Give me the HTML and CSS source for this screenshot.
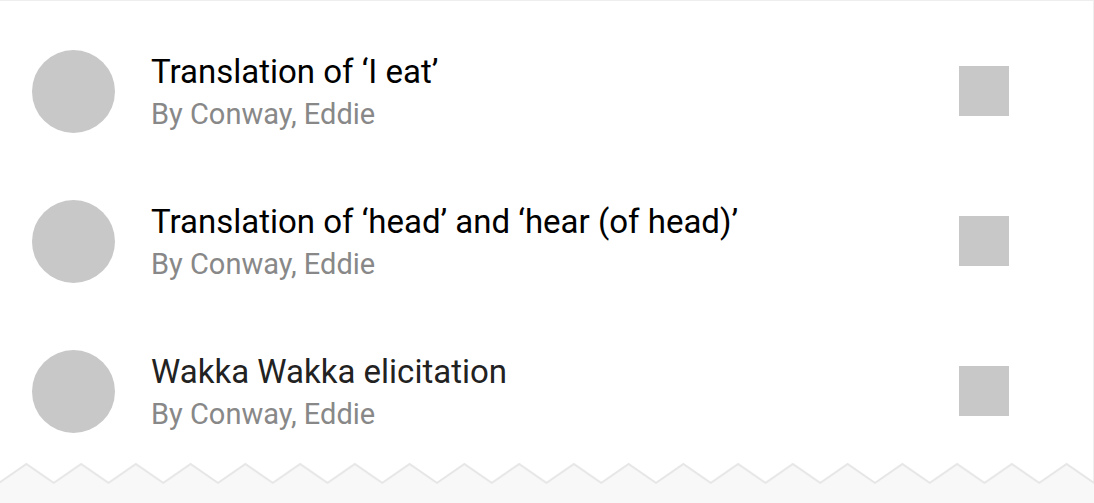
FILE: index.html
```html
<!DOCTYPE html>
<html lang="en">
<head>
<meta charset="utf-8">
<title>Documents</title>
<link rel="stylesheet" href="styles.css">
</head>
<body>
<div class="card">
  <ul class="list">
    <li class="item">
      <div class="avatar"></div>
      <div class="text">
        <div class="title">Translation of ‘I eat’</div>
        <div class="author">By Conway, Eddie</div>
      </div>
      <div class="thumb"></div>
    </li>
    <li class="item">
      <div class="avatar"></div>
      <div class="text">
        <div class="title">Translation of ‘head’ and ‘hear (of head)’</div>
        <div class="author">By Conway, Eddie</div>
      </div>
      <div class="thumb"></div>
    </li>
    <li class="item">
      <div class="avatar"></div>
      <div class="text">
        <div class="title title-muted">Wakka Wakka elicitation</div>
        <div class="author">By Conway, Eddie</div>
      </div>
      <div class="thumb"></div>
    </li>
  </ul>
  <div class="torn">
    <svg class="torn-svg" width="1094" height="41" viewBox="0 0 1094 41" preserveAspectRatio="none">
      <defs>
        <pattern id="zig" patternUnits="userSpaceOnUse" x="-1" y="0" width="54.75" height="41">
          <polygon points="0,21 27.375,2 54.75,21 54.75,41 0,41" fill="#f8f8f8"/>
          <polyline points="-0.5,21.3 27.375,2 55.25,21.3" fill="none" stroke="#e6e6e6" stroke-width="2"/>
        </pattern>
      </defs>
      <rect x="0" y="0" width="1094" height="41" fill="url(#zig)"/>
    </svg>
  </div>
</div>
</body>
</html>
```

FILE: styles.css
```css
* { box-sizing: border-box; }
html, body { margin: 0; padding: 0; background: #ffffff; }
body {
  font-family: Roboto, "Liberation Sans", Arial, sans-serif;
  width: 1094px;
  height: 503px;
  overflow: hidden;
}
.card {
  width: 1094px;
  height: 503px;
  border-top: 1px solid #eeeeee;
  border-right: 1px solid #eeeeee;
  display: flex;
  flex-direction: column;
}
.list {
  list-style: none;
  margin: 0;
  padding: 15px 0 0 0;
}
.item {
  height: 150px;
  display: flex;
  align-items: center;
  padding-left: 32px;
}
.avatar {
  width: 83px;
  height: 83px;
  border-radius: 50%;
  background: #c8c8c8;
  flex: none;
}
.text {
  flex: 1;
  padding-left: 36px;
  display: flex;
  flex-direction: column;
  gap: 6px;
  padding-top: 2px;
}
.title {
  font-size: 33px;
  line-height: 38px;
  color: #000000;
}
.title-muted { color: #222222; }
.author {
  font-size: 29px;
  line-height: 34px;
  color: #888888;
}
.thumb {
  width: 50px;
  height: 50px;
  background: #c8c8c8;
  flex: none;
  margin-right: 84px;
}
.torn {
  margin-top: -4px;
  height: 41px;
}
.torn-svg { display: block; }
```
